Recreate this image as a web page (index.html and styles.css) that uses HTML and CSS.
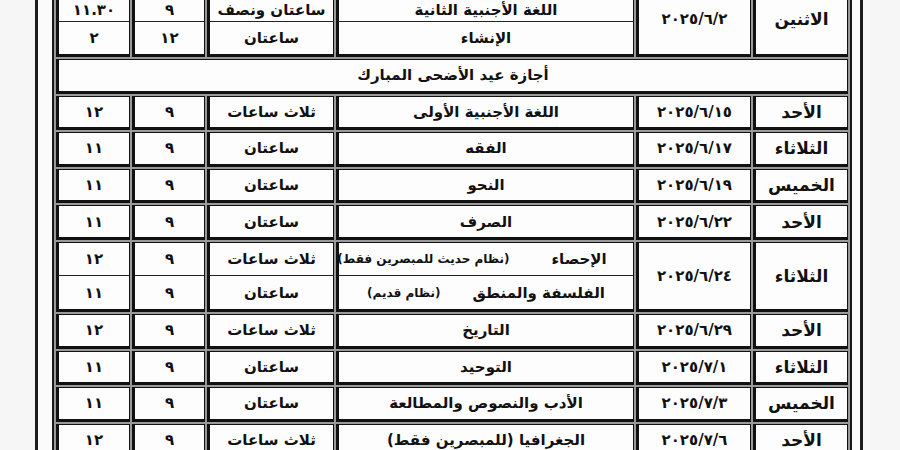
FILE: index.html
```html
<!DOCTYPE html>
<html lang="ar">
<head>
<meta charset="utf-8">
<title>جدول الامتحانات</title>
<link rel="stylesheet" href="styles.css">
</head>
<body>
<div class="frame">
  <table class="sched">
    <colgroup>
      <col class="c-day"><col class="c-date"><col class="c-subj"><col class="c-dur"><col class="c-start"><col class="c-end">
    </colgroup>
    <tr class="double first">
      <td class="day">الاثنين</td>
      <td class="date">٢٠٢٥/٦/٢</td>
      <td class="split"><div class="sub">اللغة الأجنبية الثانية</div><div class="sub">الإنشاء</div></td>
      <td class="split"><div class="sub">ساعتان ونصف</div><div class="sub">ساعتان</div></td>
      <td class="split"><div class="sub">٩</div><div class="sub">١٢</div></td>
      <td class="split"><div class="sub">١١.٣٠</div><div class="sub">٢</div></td>
    </tr>
    <tr class="single">
      <td class="holiday" colspan="6">أجازة عيد الأضحى المبارك</td>
    </tr>
    <tr class="single">
      <td class="day">الأحد</td>
      <td class="date">٢٠٢٥/٦/١٥</td>
      <td>اللغة الأجنبية الأولى</td>
      <td>ثلاث ساعات</td>
      <td>٩</td>
      <td>١٢</td>
    </tr>
    <tr class="single">
      <td class="day">الثلاثاء</td>
      <td class="date">٢٠٢٥/٦/١٧</td>
      <td>الفقه</td>
      <td>ساعتان</td>
      <td>٩</td>
      <td>١١</td>
    </tr>
    <tr class="single">
      <td class="day">الخميس</td>
      <td class="date">٢٠٢٥/٦/١٩</td>
      <td>النحو</td>
      <td>ساعتان</td>
      <td>٩</td>
      <td>١١</td>
    </tr>
    <tr class="single">
      <td class="day">الأحد</td>
      <td class="date">٢٠٢٥/٦/٢٢</td>
      <td>الصرف</td>
      <td>ساعتان</td>
      <td>٩</td>
      <td>١١</td>
    </tr>
    <tr class="double">
      <td class="day">الثلاثاء</td>
      <td class="date">٢٠٢٥/٦/٢٤</td>
      <td class="split">
        <div class="sub pair pair-a"><span>الإحصاء</span><span class="note">(نظام حديث للمبصرين فقط)</span></div>
        <div class="sub pair pair-b"><span>الفلسفة والمنطق</span><span class="note">(نظام قديم)</span></div>
      </td>
      <td class="split"><div class="sub">ثلاث ساعات</div><div class="sub">ساعتان</div></td>
      <td class="split"><div class="sub">٩</div><div class="sub">٩</div></td>
      <td class="split"><div class="sub">١٢</div><div class="sub">١١</div></td>
    </tr>
    <tr class="single">
      <td class="day">الأحد</td>
      <td class="date">٢٠٢٥/٦/٢٩</td>
      <td>التاريخ</td>
      <td>ثلاث ساعات</td>
      <td>٩</td>
      <td>١٢</td>
    </tr>
    <tr class="single">
      <td class="day">الثلاثاء</td>
      <td class="date">٢٠٢٥/٧/١</td>
      <td>التوحيد</td>
      <td>ساعتان</td>
      <td>٩</td>
      <td>١١</td>
    </tr>
    <tr class="single">
      <td class="day">الخميس</td>
      <td class="date">٢٠٢٥/٧/٣</td>
      <td>الأدب والنصوص والمطالعة</td>
      <td>ساعتان</td>
      <td>٩</td>
      <td>١١</td>
    </tr>
    <tr class="single">
      <td class="day">الأحد</td>
      <td class="date">٢٠٢٥/٧/٦</td>
      <td>الجغرافيا (للمبصرين فقط)</td>
      <td>ثلاث ساعات</td>
      <td>٩</td>
      <td>١٢</td>
    </tr>
  </table>
</div>
</body>
</html>
```

FILE: styles.css
```css
html, body {
  margin: 0;
  padding: 0;
  background: #f6f6f6;
  overflow: hidden;
  height: 450px;
}

body {
  font-family: "DejaVu Sans", sans-serif;
  color: #111;
}

.frame {
  box-sizing: border-box;
  width: 828px;
  margin: -21px 0 0 35px;
  border-left: 3px solid #1c1c1c;
  border-right: 3px solid #1c1c1c;
  padding: 0 8px 0 14px;
  background: #fbfbfb;
}

.sched {
  direction: rtl;
  table-layout: fixed;
  width: 800px;
  border-collapse: separate;
  border-spacing: 2px;
  border: 2px solid #1a1a1a;
  background: #9a9a9a;
}

.c-day { width: 95px; }
.c-date { width: 115px; }
.c-subj { width: 298px; }
.c-dur { width: 127px; }
.c-start { width: 73px; }
.c-end { width: 74px; }

.sched td {
  box-sizing: border-box;
  background: #fdfdfd;
  border-style: solid;
  border-color: #111;
  border-width: 1px 1px 3px 3px;
  padding: 0;
  text-align: center;
  vertical-align: middle;
  font-weight: bold;
  font-size: 15px;
  line-height: 20px;
  white-space: nowrap;
  overflow: hidden;
}

.single td {
  height: 34.6px;
}

.double td {
  height: 70px;
}

.double.first td {
  height: 74px;
}

.sched td.day {
  font-size: 17px;
}

.sched td.date {
  font-size: 15px;
}

.sched td.split {
  padding: 0;
}

.sub {
  height: 32.5px;
  display: flex;
  align-items: center;
  justify-content: center;
}

.sub + .sub {
  border-top: 1px solid #222;
}

.first .sub:first-child {
  box-sizing: border-box;
  height: 37px;
  align-items: flex-end;
  padding-bottom: 2px;
  line-height: 18px;
}

.first .sub + .sub {
  height: 32px;
}

.pair-a {
  gap: 42px;
  padding-right: 28px;
}

.pair-b {
  gap: 32px;
}

.note {
  font-size: 12px;
}

.holiday {
  font-size: 15px;
}
```
